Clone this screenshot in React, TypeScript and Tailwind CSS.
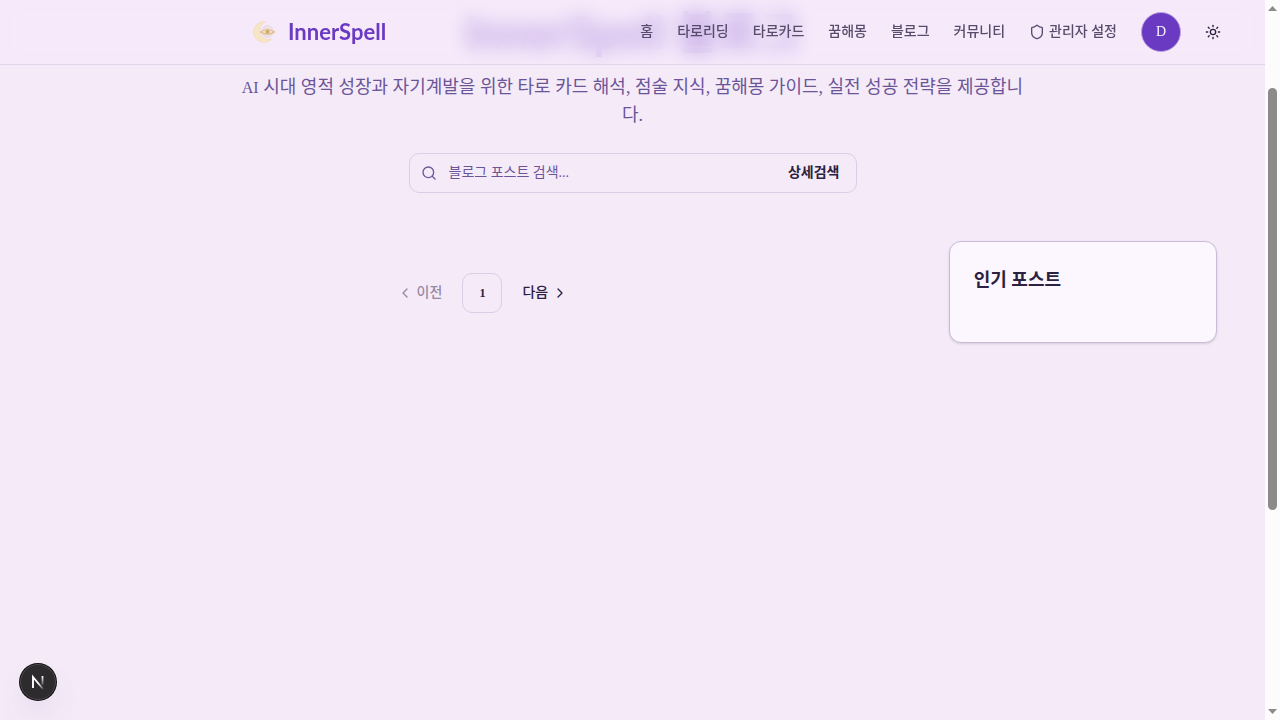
import { ChevronLeft, ChevronRight, Search, Shield, Sun } from "lucide-react";

const navItems = ["홈", "타로리딩", "타로카드", "꿈해몽", "블로그", "커뮤니티"];

function Logo() {
  return (
    <svg viewBox="0 0 28 28" className="size-7" fill="none" aria-hidden="true">
      <path d="M15.500 3.800A10.300 10.300 0 1 0 21.500 21A9 9 0 1 1 15.500 3.800Z" fill="#f8e5c6" stroke="#f0d6ab" strokeWidth=".6" />
      <circle cx="17.500" cy="13.500" r="6" fill="#ecdfe6" stroke="#e0d0d0" strokeWidth=".8" strokeDasharray="1 1" />
      <path d="M10.500 14Q17.500 9 24.500 14Q17.500 18.500 10.500 14Z" fill="#f3e3cf" stroke="#dfbb80" strokeWidth="1.200" />
      <circle cx="17.500" cy="13.800" r="2.200" fill="#dcb46a" />
      <circle cx="17.500" cy="13.800" r=".9" fill="#b09a8a" />
    </svg>
  );
}

function Header() {
  return (
    <header className="fixed top-0 right-[15px] left-0 z-20 border-b border-[#e0d6ec] bg-[#f6eafb]/60 backdrop-blur-[10px]">
      <div className="flex h-16 items-center justify-between pr-8 pl-[250px]">
        <a href="#home" className="flex items-center gap-2.5">
          <Logo />
          <span className="font-['Lato'] text-[22px] leading-8 font-bold text-[#6b3ac2]">InnerSpell</span>
        </a>
        <div className="flex items-center gap-3">
          <nav className="mr-3 flex items-center gap-6 font-['Liberation_Sans_Narrow','Liberation_Serif','Noto_Sans_CJK_KR',sans-serif] text-sm font-medium text-[#584c6d]">
            {navItems.map((item) => (
              <a key={item} href="#menu" className="whitespace-nowrap">{item}</a>
            ))}
            <a href="#admin" className="flex items-center gap-1 whitespace-nowrap">
              <Shield className="size-4" />
              관리자 설정
            </a>
          </nav>
          <button type="button" aria-label="프로필" className="size-10 rounded-full border border-[#b9a0e0] bg-[#6b3ac2] text-sm text-[#faf5ff]">D</button>
          <button type="button" aria-label="테마 변경" className="grid size-10 place-items-center text-[#2b2140]">
            <Sun className="size-4" />
          </button>
        </div>
      </div>
    </header>
  );
}

function ScrollRail() {
  return (
    <div aria-hidden="true" className="fixed inset-y-0 right-0 flex w-[15px] flex-col items-center justify-between bg-[#fcfcfc] py-1.5 text-[#8b8b8b]">
      <svg viewBox="0 0 9 5" className="h-[5px] w-[9px]" fill="currentColor"><path d="M0 5L4.500 0L9 5Z" /></svg>
      <div className="absolute top-[88px] h-[422px] w-[9px] rounded-full bg-[#8b8b8b]" />
      <svg viewBox="0 0 9 5" className="h-[5px] w-[9px]" fill="currentColor"><path d="M0 0L4.500 5L9 0Z" /></svg>
    </div>
  );
}

function DevBadge() {
  return (
    <button type="button" aria-label="개발 도구" className="fixed bottom-5 left-5 grid size-9 place-items-center rounded-full border border-[#4a484b] bg-[#2d2b2e] shadow-[0_0_0_1px_#111,0_16px_32px_-8px_rgba(60,40,100,0.24)]">
      <svg viewBox="0 0 16 16" className="size-4" fill="none" aria-hidden="true">
        <defs>
          <linearGradient id="stem" x1="0" y1="2" x2="0" y2="13" gradientUnits="userSpaceOnUse">
            <stop stopColor="white" /><stop offset="1" stopColor="white" stopOpacity="0" />
          </linearGradient>
          <linearGradient id="diagonal" x1="9" y1="9" x2="14" y2="16" gradientUnits="userSpaceOnUse">
            <stop stopColor="white" /><stop offset="1" stopColor="white" stopOpacity="0" />
          </linearGradient>
        </defs>
        <path d="M3 14V3L13 15" stroke="url(#diagonal)" strokeWidth="1.900" />
        <path d="M12.500 2V11" stroke="url(#stem)" strokeWidth="1.800" />
      </svg>
    </button>
  );
}

export default function App() {
  return (
    <div lang="ko" className="min-h-screen bg-[#f5ebf8] pr-[15px] font-['Liberation_Serif','Noto_Sans_CJK_KR',serif] text-[#2b2140]">
      <Header />
      <main className="px-12 pt-1">
        <section className="flex flex-col items-center">
          <h1 className="font-['Lato','Noto_Sans_CJK_KR',sans-serif] text-[45px] leading-[56px] font-bold text-[#6b3ac2]">InnerSpell 블로그</h1>
          <p className="mt-[13px] max-w-[784px] text-center font-['Liberation_Sans_Narrow','Liberation_Serif','Noto_Sans_CJK_KR',sans-serif] text-lg leading-7 text-[#6b5598]">
            <span className="font-['Liberation_Serif'] text-base">AI</span> 시대 영적 성장과 자기계발을 위한 타로 카드 해석, 점술 지식, 꿈해몽 가이드, 실전 성공 전략을 제공합니다.
          </p>
          <form className="mt-6 flex h-10 w-full max-w-md items-center rounded-[10px] border border-[#d8cee5] pr-4 pl-[11px]">
            <Search className="size-4 shrink-0 text-[#6b5598]" />
            <input aria-label="블로그 포스트 검색" placeholder="블로그 포스트 검색..." className="ml-3 min-w-0 flex-1 bg-transparent text-sm outline-none placeholder:text-[#6b5598]" />
            <button type="button" className="text-sm font-bold">상세검색</button>
          </form>
        </section>
        <div className="mt-12 grid grid-cols-4 gap-8">
          <nav aria-label="페이지" className="col-span-3 mt-8 flex h-10 items-center justify-center gap-5 text-sm font-medium">
            <button type="button" disabled className="flex items-center gap-1 text-[#958aa4]">
              <ChevronLeft className="size-4" />이전
            </button>
            <button type="button" className="size-10 rounded-[10px] border border-[#d8cee5] text-xs font-bold">1</button>
            <button type="button" className="flex items-center gap-1">
              다음<ChevronRight className="size-4" />
            </button>
          </nav>
          <aside className="rounded-xl border border-[#c7bcd8] bg-[#fcf7fe] p-6 pb-12 shadow-sm">
            <h2 className="text-lg leading-7 font-bold">인기 포스트</h2>
          </aside>
        </div>
      </main>
      <DevBadge />
      <ScrollRail />
    </div>
  );
}
